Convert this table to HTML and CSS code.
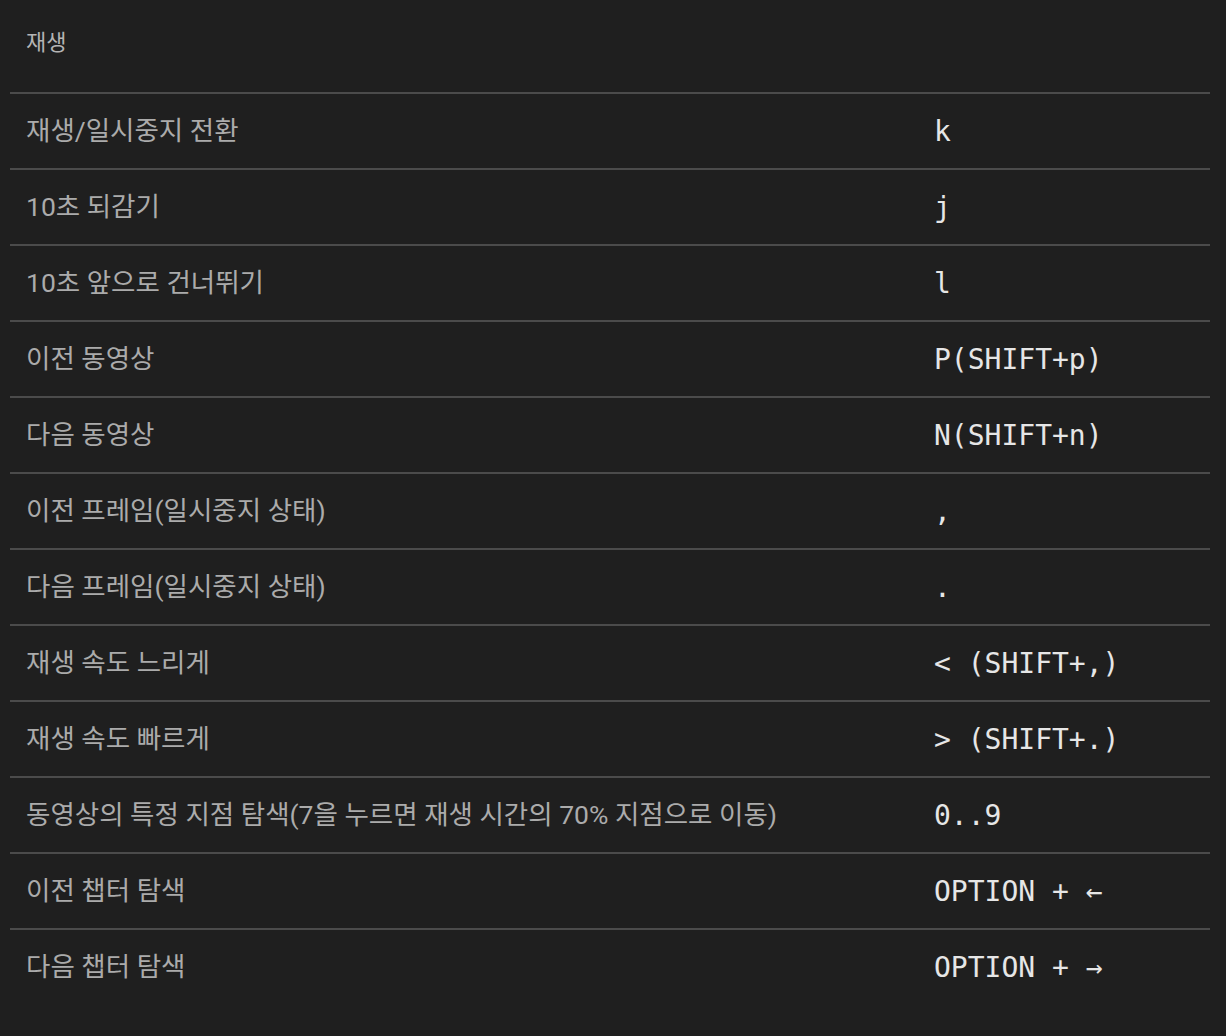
FILE: index.html
```html
<!DOCTYPE html>
<html lang="ko">
<head>
<meta charset="utf-8">
<title>단축키 - 재생</title>
<link rel="stylesheet" href="styles.css">
</head>
<body>
<section class="panel">
  <h2 class="panel-title">재생</h2>
  <div class="shortcut-list">
    <div class="row"><div class="desc">재생/일시중지 전환</div><div class="key">k</div></div>
    <div class="row"><div class="desc">10초 되감기</div><div class="key">j</div></div>
    <div class="row"><div class="desc">10초 앞으로 건너뛰기</div><div class="key">l</div></div>
    <div class="row"><div class="desc">이전 동영상</div><div class="key">P(SHIFT+p)</div></div>
    <div class="row"><div class="desc">다음 동영상</div><div class="key">N(SHIFT+n)</div></div>
    <div class="row"><div class="desc">이전 프레임(일시중지 상태)</div><div class="key">,</div></div>
    <div class="row"><div class="desc">다음 프레임(일시중지 상태)</div><div class="key">.</div></div>
    <div class="row"><div class="desc">재생 속도 느리게</div><div class="key">&lt; (SHIFT+,)</div></div>
    <div class="row"><div class="desc">재생 속도 빠르게</div><div class="key">&gt; (SHIFT+.)</div></div>
    <div class="row"><div class="desc">동영상의 특정 지점 탐색(7을 누르면 재생 시간의 70% 지점으로 이동)</div><div class="key">0..9</div></div>
    <div class="row"><div class="desc">이전 챕터 탐색</div><div class="key">OPTION + ←</div></div>
    <div class="row"><div class="desc">다음 챕터 탐색</div><div class="key">OPTION + →</div></div>
  </div>
</section>
</body>
</html>
```
FILE: styles.css
```css
html, body {
  margin: 0;
  padding: 0;
  background: #1f1f1f;
}

body {
  font-family: Roboto, "Noto Sans CJK KR", sans-serif;
  color: #aaaaaa;
}

.panel {
  margin: 0 16px 0 10px;
}

.panel-title {
  margin: 0;
  height: 92px;
  box-sizing: border-box;
  padding: 29px 16px 0;
  font-size: 22px;
  line-height: 28px;
  font-weight: 400;
  color: #b4b4b4;
}

.shortcut-list {
  display: flex;
  flex-direction: column;
}

.row {
  display: grid;
  grid-template-columns: 924px 1fr;
  height: 76px;
  box-sizing: border-box;
  border-top: 2px solid #4b4b4b;
}

.desc {
  padding: 18.5px 0 0 16px;
  font-size: 26.5px;
  line-height: 36px;
  color: #ababab;
  white-space: nowrap;
}

.key {
  padding-top: 20px;
  font-family: "DejaVu Sans Mono", monospace;
  font-size: 28px;
  line-height: 36px;
  color: #e6e6e6;
  white-space: pre;
}
```
